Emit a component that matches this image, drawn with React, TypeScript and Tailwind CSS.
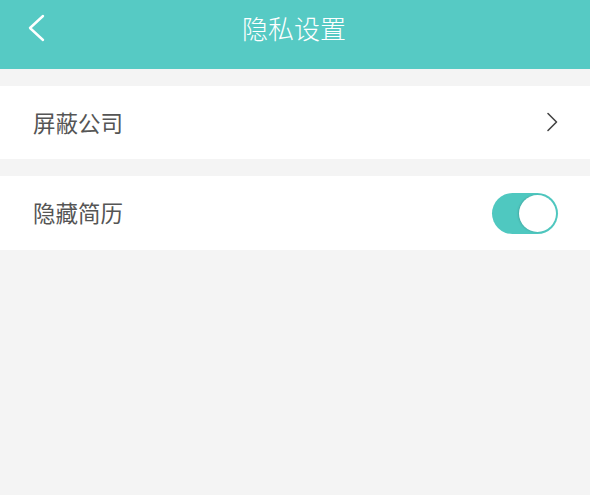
export default function App() {
  return (
    <div
      className="w-[590px] h-[495px] bg-[#f4f4f4] flex flex-col"
      style={{ fontFamily: '"Noto Sans CJK SC", "Noto Sans", sans-serif' }}
    >
      {/* Header */}
      <div className="h-[69px] bg-[#56cac4] flex items-center relative shrink-0">
        <svg className="absolute left-[26px] top-[14px] w-[20px] h-[28px]" viewBox="0 0 20 28" fill="none">
          <path d="M17 2 L4 14 L17 26" stroke="#ffffff" strokeWidth="2.4" strokeLinecap="round" strokeLinejoin="round" />
        </svg>
        <h1 className="flex-1 text-center text-white text-[26px] font-light leading-none pb-[14px] pr-[2px]">隐私设置</h1>
      </div>

      <div className="mt-[17px] bg-white h-[73px] flex items-center justify-between pl-[33px] pr-[32px]">
        <span className="text-[22.5px] text-[#555555]">屏蔽公司</span>
        <svg className="w-[12px] h-[20px] mb-[2px]" viewBox="0 0 12 20" fill="none">
          <path d="M2 1.5 L10.5 10 L2 18.5" stroke="#444444" strokeWidth="1.6" strokeLinecap="round" strokeLinejoin="round" />
        </svg>
      </div>

      <div className="mt-[17px] bg-white h-[74px] flex items-center justify-between pl-[33px] pr-[32px]">
        <span className="text-[22.5px] text-[#555555]">隐藏简历</span>
        <div className="w-[66px] h-[41px] rounded-full bg-[#4fc8c0] flex items-center justify-end p-[2px]">
          <div className="w-[37px] h-[37px] rounded-full bg-white shadow-[-1px_0_2px_rgba(0,0,0,0.15)]" />
        </div>
      </div>
    </div>
  );
}
